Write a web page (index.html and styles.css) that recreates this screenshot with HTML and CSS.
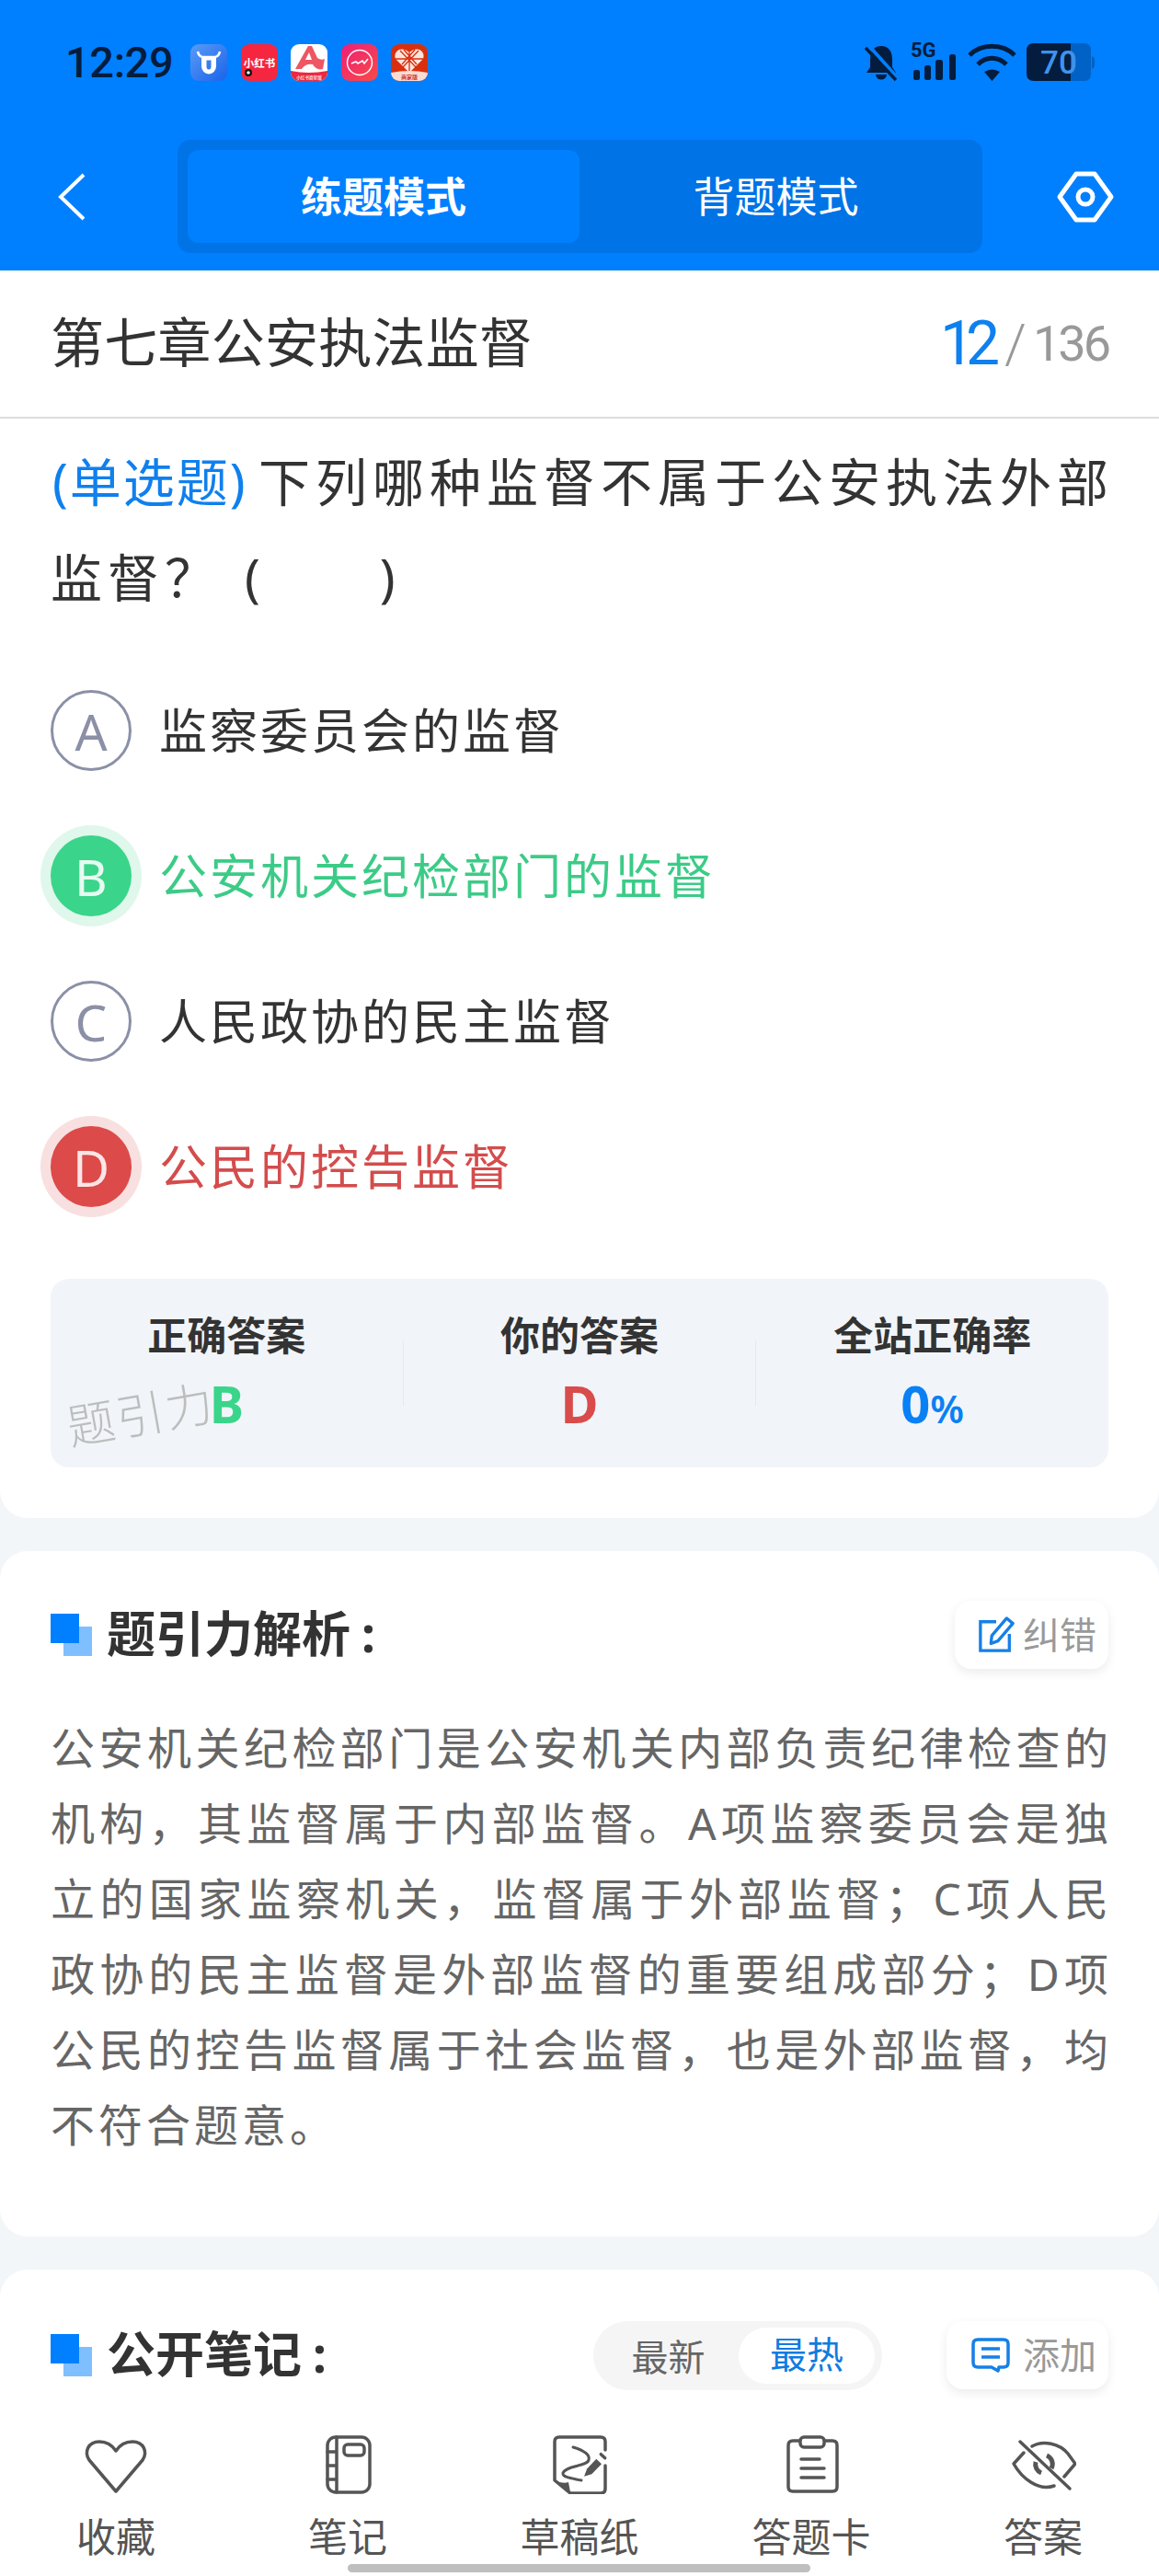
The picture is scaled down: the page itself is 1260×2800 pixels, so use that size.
FILE: index.html
```html
<!DOCTYPE html>
<html lang="zh-CN">
<head>
  <meta charset="UTF-8">
  <meta name="viewport" content="width=device-width, initial-scale=1.0">
  <title>第七章公安执法监督</title>
  <link rel="stylesheet" href="styles.css">
</head>
<body>
<div class="phone">

  <header class="top">
    <!-- Status bar -->
    <div class="status">
      <span class="time">12:29</span>
      <div class="apps">
        <svg class="app" viewBox="0 0 40 40">
          <defs><linearGradient id="appBlue" x1="0" y1="0" x2="1" y2="1"><stop offset="0" stop-color="#5a9bf6"/><stop offset="1" stop-color="#1a63ea"/></linearGradient></defs>
          <rect width="40" height="40" rx="9" fill="url(#appBlue)"/>
          <path d="M8 8 Q9 13 13 14 H27 Q31 13 32 8" fill="none" stroke="#fff" stroke-width="2.6"/>
          <path d="M12 14 H28 V24 A8 8.5 0 0 1 12 24 Z M17.5 17.5 V24 A2.5 3.5 0 0 0 22.5 24 V17.5 Z" fill="#fff" fill-rule="evenodd"/>
        </svg>
        <svg class="app" viewBox="0 0 40 40">
          <rect width="40" height="40" rx="9" fill="#f5263f"/>
          <text x="20" y="25" class="app-text" font-size="11.5" fill="#fff">小红书</text>
          <circle cx="8" cy="31" r="4" fill="#111"/>
          <circle cx="8" cy="31" r="1.8" fill="#eee"/>
        </svg>
        <svg class="app" viewBox="0 0 40 40">
          <rect width="40" height="40" rx="9" fill="#fff"/>
          <path d="M5 27 L19 2 H23 L29 15 Q33 18 37 16 L35 27 Q28 29 24 22 Q16 21 12 27 Z" fill="#ee5663"/>
          <path d="M16 17 L20 9 L23 17 Z" fill="#fff"/>
          <path d="M0 29 Q20 33 40 29 V31 A9 9 0 0 1 31 40 H9 A9 9 0 0 1 0 31 Z" fill="#ea2a41"/>
          <text x="20" y="37.5" class="app-text" font-size="4.6" fill="#ffd9dd">小红书商家版</text>
        </svg>
        <svg class="app" viewBox="0 0 40 40">
          <defs><linearGradient id="appPink" x1="0" y1="0" x2="1" y2="1"><stop offset="0" stop-color="#ee1f78"/><stop offset="1" stop-color="#f84b47"/></linearGradient></defs>
          <rect width="40" height="40" rx="9" fill="url(#appPink)"/>
          <circle cx="20" cy="20" r="13.5" fill="none" stroke="#fff" stroke-width="1.4"/>
          <path d="M11 21 L16 19 L18 21 L23 18 L25 21 L29 16" fill="none" stroke="#fff" stroke-width="1.6"/>
        </svg>
        <svg class="app" viewBox="0 0 40 40">
          <rect width="40" height="40" rx="9" fill="#d8300f"/>
          <path d="M20 31 L5 16 C2 8 11 1 20 9 C29 1 38 8 35 16 Z" fill="#fbe4dc"/>
          <path d="M20 9 V31 M5 16 H35 M10 7 L27 25 M30 7 L13 25 M12 22 L26 6 M28 22 L14 6" stroke="#d8300f" stroke-width="1.3"/>
          <path d="M0 31 Q20 27 40 31 A9 9 0 0 1 31 40 H9 A9 9 0 0 1 0 31 Z" fill="#fbdcd2"/>
          <text x="20" y="38" class="app-text" font-size="6" fill="#c33">商家版</text>
        </svg>
      </div>
      <div class="sys">
        <svg class="sys-bell" viewBox="0 0 38 41">
          <path d="M19 3 C10 3 7 10 7 18 V26 L3 32 H35 L31 26 V18 C31 10 28 3 19 3 Z M13 34 H25 A6 5.5 0 0 1 13 34 Z" fill="#041c3d"/>
          <path d="M5 2 L39 40" stroke="#0080ff" stroke-width="4"/>
          <path d="M2 5 L35 40" stroke="#041c3d" stroke-width="3.4"/>
        </svg>
        <svg class="sys-signal" viewBox="0 -6 50 48">
          <text x="0" y="16" class="sig-text">5G</text>
          <rect x="3" y="30" width="7" height="11" rx="2.5" fill="#041c3d"/>
          <rect x="15" y="25" width="7" height="16" rx="2.5" fill="#041c3d"/>
          <rect x="27" y="19" width="8" height="22" rx="2.5" fill="#041c3d"/>
          <rect x="42" y="13" width="7" height="28" rx="2.5" fill="#041c3d"/>
        </svg>
        <svg class="sys-wifi" viewBox="0 0 53 41">
          <path d="M2 13 C15 0 38 0 51 13 M11 23 C20 14 33 14 42 23" fill="none" stroke="#041c3d" stroke-width="5"/>
          <path d="M18 31 Q26.500 26 35 31 L26.500 41 Z" fill="#041c3d"/>
        </svg>
        <svg class="sys-batt" viewBox="0 0 74 41">
          <path d="M48 0 H63 Q70 0 70 8 V33 Q70 41 63 41 H48 Z M71 14 Q74 15 74 18 V24 Q74 27 71 28 Z" fill="#0062c6"/>
          <path d="M8 0 H48 V41 H8 Q0 41 0 33 V8 Q0 0 8 0 Z" fill="#041c3d"/>
          <text x="35" y="33" class="batt-text">70</text>
        </svg>
      </div>
    </div>

    <!-- Title bar with mode tabs -->
    <div class="bar">
      <div class="back">
        <svg viewBox="0 0 30 52"><path d="M28 2 L3 26 L28 50" fill="none" stroke="#fff" stroke-width="4"/></svg>
      </div>
      <div class="tabs">
        <div class="tab tab-on">练题模式</div>
        <div class="tab">背题模式</div>
      </div>
      <svg class="gear" viewBox="0 0 64 58">
        <path d="M22 4 H42 L60 29 L42 54 H22 L4 29 Z" fill="none" stroke="#fff" stroke-width="5" stroke-linejoin="round"/>
        <circle cx="32" cy="29" r="8" fill="none" stroke="#fff" stroke-width="5"/>
      </svg>
    </div>
  </header>

  <section class="card card-main">
    <div class="chapter">
      <span class="chapter-name">第七章公安执法监督</span>
      <span class="count"><span class="count-now">12</span><span class="count-slash">/</span><span class="count-all">136</span></span>
    </div>

    <div class="question">
      <div class="q-first"><span class="q-type">(单选题)</span><span class="q-main">下列哪种监督不属于公安执法外部</span></div>
      <div class="q-second"><span>监督？</span><span class="q-blank">(　　)</span></div>
    </div>

    <div class="options">
      <div class="option"><span class="letter">A</span><span class="opt-text">监察委员会的监督</span></div>
      <div class="option is-right"><span class="letter">B</span><span class="opt-text">公安机关纪检部门的监督</span></div>
      <div class="option"><span class="letter">C</span><span class="opt-text">人民政协的民主监督</span></div>
      <div class="option is-wrong"><span class="letter">D</span><span class="opt-text">公民的控告监督</span></div>
    </div>

    <div class="stats">
      <div class="stat">
        <div class="stat-label">正确答案</div>
        <div class="stat-value green">B</div>
      </div>
      <div class="stat-line"></div>
      <div class="stat">
        <div class="stat-label">你的答案</div>
        <div class="stat-value red">D</div>
      </div>
      <div class="stat-line"></div>
      <div class="stat">
        <div class="stat-label">全站正确率</div>
        <div class="stat-value blue">0<small>%</small></div>
      </div>
      <div class="watermark">题引力</div>
    </div>
  </section>

  <section class="card card-gap">
    <div class="head">
      <h2 class="head-title">
        <svg class="mark" viewBox="0 0 45 46"><rect x="14" y="14" width="31" height="32" fill="#80bfff"/><rect width="31" height="32" fill="#0080ff"/></svg>
        <span class="head-text">题引力解析<span class="colon">:</span></span>
      </h2>
      <div class="chip">
        <svg class="chip-icon" viewBox="0 0 42 42">
          <path d="M21 6 H3 V39 H36 V20" fill="none" stroke="#1580e6" stroke-width="3.500"/>
          <path d="M33 2 L40 8 L23 28 L15 31 L16 22 Z" fill="none" stroke="#1580e6" stroke-width="3.500" stroke-linejoin="round"/>
        </svg>
        <span class="chip-text">纠错</span>
      </div>
    </div>
    <p class="analysis">公安机关纪检部门是公安机关内部负责纪律检查的机构，其监督属于内部监督。A项监察委员会是独立的国家监察机关，监督属于外部监督；C项人民政协的民主监督是外部监督的重要组成部分；D项公民的控告监督属于社会监督，也是外部监督，均不符合题意。</p>
  </section>

  <section class="card card-gap card-notes">
    <div class="head">
      <h2 class="head-title">
        <svg class="mark" viewBox="0 0 45 46"><rect x="14" y="14" width="31" height="32" fill="#80bfff"/><rect width="31" height="32" fill="#0080ff"/></svg>
        <span class="head-text">公开笔记<span class="colon">:</span></span>
      </h2>
      <div class="head-right">
        <div class="sort">
          <span class="sort-item">最新</span>
          <span class="sort-item sort-on">最热</span>
        </div>
        <div class="chip chip-add">
          <svg class="chip-icon" viewBox="0 0 42 38">
            <path d="M7 2 H35 Q40 2 40 7 V27 Q40 32 35 32 H30 L29 36 L22 32 H7 Q2 32 2 27 V7 Q2 2 7 2 Z" fill="none" stroke="#1580e6" stroke-width="3.500" stroke-linejoin="round"/>
            <path d="M11 12 H31 M11 21 H31" stroke="#1580e6" stroke-width="3.500"/>
          </svg>
          <span class="chip-text">添加</span>
        </div>
      </div>
    </div>
  </section>

  <!-- Bottom toolbar -->
  <nav class="tools">
    <div class="tool">
      <svg class="tool-icon" viewBox="-1 0 72 64"><path d="M35 61 L6 27 C0 18 5 7 17 7 C25 7 31 11 35 17 C39 11 45 7 53 7 C65 7 70 18 64 27 Z"/></svg>
      <span class="tool-name">收藏</span>
    </div>
    <div class="tool">
      <svg class="tool-icon" viewBox="-1 0 72 64">
        <rect x="13" y="2" width="46" height="60" rx="9"/>
        <path d="M23 2 V62 M13 18 H23 M13 33 H23 M13 48 H23"/>
        <rect x="31" y="10" width="22" height="12" rx="4"/>
      </svg>
      <span class="tool-name">笔记</span>
    </div>
    <div class="tool">
      <svg class="tool-icon" viewBox="-1 0 72 64">
        <path d="M63 16 V7 Q63 2 58 2 H13 Q8 2 8 7 V49 L25 63 H58 Q63 63 63 58 V33"/>
        <path class="tool-fill" d="M10 50 Q18 53 23 51 L25 62 Z"/>
        <path class="tool-thin" d="M28 13 C38 16 47 20 45 27 C43 34 20 33 17 41 C16 46 28 47 37 49"/>
        <path class="tool-fill" d="M43.300 36.300 L53.300 25.700 L59 31.300 L48.300 42.300 L40 44.700 Z"/>
        <path d="M58.300 20.700 L62.700 24.700"/>
      </svg>
      <span class="tool-name">草稿纸</span>
    </div>
    <div class="tool">
      <svg class="tool-icon" viewBox="-1 0 72 64">
        <path d="M22 6 H15 Q10 6 10 11 V56 Q10 61 15 61 H58 Q63 61 63 56 V11 Q63 6 58 6 H50"/>
        <rect x="23" y="2" width="26" height="11" rx="4"/>
        <path d="M24 26 H44 M24 36 H49 M24 46 H49"/>
      </svg>
      <span class="tool-name">答题卡</span>
    </div>
    <div class="tool">
      <svg class="tool-icon" viewBox="-1 0 72 64">
        <path d="M23 12 C35 5 53 9 62 20 L70 31 L58 45"/>
        <path d="M14 19 L3 31 C12 47 30 61 47 55"/>
        <path d="M10 7 L64 58"/>
        <path class="tool-thick" d="M39 22 A10 10 0 0 1 44 36 M27 29 A10 10 0 0 0 33 41"/>
      </svg>
      <span class="tool-name">答案</span>
    </div>
  </nav>

  <div class="home-bar"></div>
</div>
</body>
</html>
```

FILE: styles.css
```css
/* Page frame */
body {
  margin: 0;
  background-color: #f2f6f9;
  font-family: "Noto Sans", "Noto Sans CJK SC", sans-serif;
  color: #333;
}
.phone {
  position: relative;
  display: flex;
  flex-direction: column;
  width: 1260px;
  height: 2800px;
  overflow: hidden;
}

/* Blue header */
.top {
  height: 294px;
  background-color: #0080ff;
  flex-shrink: 0;
}
.status {
  display: flex;
  align-items: center;
  height: 41px;
  padding: 47px 70px 64px 71px;
}
.time {
  width: 136px;
  font-family: Roboto, sans-serif;
  font-size: 47px;
  font-weight: 500;
  letter-spacing: -0.400px;
  color: #041c3d;
}
.apps {
  display: flex;
  gap: 14.500px;
}
.app {
  width: 40px;
  height: 40px;
  display: block;
}
.app-text {
  font-family: "Noto Sans CJK SC", sans-serif;
  font-weight: 700;
  text-anchor: middle;
}
.sys {
  display: flex;
  align-items: flex-end;
  margin-left: auto;
  height: 41px;
}
.sys svg {
  display: block;
  height: 41px;
}
.sys-bell { width: 38px; }
.sys .sys-signal { width: 50px; height: 48px; margin-left: 13px; }
.sys-wifi { width: 53px; margin-left: 12px; }
.sys-batt { width: 74px; margin-left: 11px; }
.sig-text {
  font-family: Roboto, sans-serif;
  font-size: 22px;
  font-weight: 700;
  fill: #041c3d;
}
.batt-text {
  font-family: Roboto, sans-serif;
  font-size: 35px;
  font-weight: 500;
  fill: #3f93ec;
  text-anchor: middle;
}

.bar {
  display: flex;
  align-items: center;
  height: 123px;
}
.back {
  width: 130px;
  padding-left: 63px;
  box-sizing: content-box;
}
.back svg {
  display: block;
  width: 30px;
  height: 52px;
}
.tabs {
  display: flex;
  width: 853px;
  height: 101px;
  padding: 11px;
  border-radius: 14px;
  background-color: #0073e6;
}
.tab {
  display: flex;
  flex: 1;
  align-items: center;
  justify-content: center;
  padding-bottom: 4px;
  border-radius: 12px;
  font-size: 45px;
  color: #fff;
}
.tab-on {
  flex: none;
  box-sizing: border-box;
  width: 426px;
  background-color: #0080ff;
  font-weight: 700;
}
.gear {
  width: 64px;
  height: 58px;
  margin-left: 80px;
}

/* White cards */
.card {
  background-color: #fff;
  padding: 0 55px;
}
.card-main {
  height: 1356px;
  box-sizing: border-box;
  border-radius: 0 0 30px 30px;
  flex-shrink: 0;
}
.card-gap {
  margin-top: 36px;
  padding-top: 54px;
  border-radius: 30px;
}
.card-notes {
  flex: 1;
  padding-top: 56px;
  border-radius: 30px 30px 0 0;
}

.chapter {
  display: flex;
  align-items: center;
  justify-content: space-between;
  height: 159px;
  margin: 0 -55px;
  padding: 0 55px;
  border-bottom: 2px solid #ddd;
}
.chapter-name {
  padding-bottom: 10px;
  font-size: 58px;
  letter-spacing: 0.250px;
  color: #333;
}
.count {
  display: flex;
  align-items: center;
  font-family: Roboto, sans-serif;
  line-height: 70px;
  color: #999;
}
.count-now {
  font-size: 66px;
  font-weight: 400;
  letter-spacing: -9px;
  color: #0f80ee;
  margin-right: 14px;
}
.count-slash {
  font-size: 60px;
  font-weight: 300;
  margin-right: 7px;
}
.count-all {
  font-size: 54px;
  font-weight: 400;
  letter-spacing: -3px;
}

.question {
  margin: 16px -6px 0 0;
  font-size: 56px;
  line-height: 104px;
  letter-spacing: 6px;
}
.q-first {
  display: flex;
  justify-content: space-between;
}
.q-second {
  display: flex;
}
.q-blank {
  margin-left: 25px;
  white-space: pre;
}
.q-type {
  margin-left: 2px;
  color: #0f80ee;
  letter-spacing: 2px;
}

/* Answer options */
.options {
  margin-top: 36px;
}
.option {
  display: flex;
  align-items: center;
  gap: 30px;
  height: 158px;
  font-size: 52px;
  letter-spacing: 3px;
  color: #333;
}
.opt-text {
  padding-bottom: 6px;
}
.letter {
  display: flex;
  align-items: center;
  justify-content: center;
  box-sizing: border-box;
  width: 88px;
  height: 88px;
  border: 3px solid #8b90a7;
  border-radius: 50%;
  font-size: 55px;
  font-weight: 400;
  letter-spacing: 0;
  color: #8b90a7;
}
.is-right { color: #3ccb87; }
.is-right .letter {
  border: none;
  background-color: #3ad58a;
  box-shadow: 0 0 0 11px #e0f7ec;
  color: #e6fbf1;
}
.is-wrong { color: #d44c4c; }
.is-wrong .letter {
  border: none;
  background-color: #dc4a4a;
  box-shadow: 0 0 0 11px #f8e0e0;
  color: #fbe6e6;
}

/* Answer summary box */
.stats {
  position: relative;
  display: flex;
  height: 205px;
  margin-top: 43px;
  border-radius: 20px;
  background-color: #f1f5f9;
}
.stat {
  flex: 1;
  padding-top: 32px;
  text-align: center;
}
.stat-label {
  font-size: 43px;
  line-height: 60px;
  font-weight: 700;
}
.stat-value {
  margin-top: 8px;
  font-size: 56px;
  line-height: 70px;
  font-weight: 700;
}
.stat-value small {
  font-size: 42px;
  font-weight: 600;
}
.green { color: #3ad58a; }
.red { color: #d94c4c; }
.blue { color: #0a80f5; }
.stat-line {
  width: 1px;
  height: 71px;
  margin-top: 67px;
  background-color: #e6eaee;
}
.watermark {
  position: absolute;
  left: 17px;
  top: 117px;
  font-size: 52px;
  line-height: 60px;
  font-weight: 300;
  letter-spacing: 2px;
  color: #bdbdbd;
  transform: rotate(-10deg);
}

/* Section heads */
.head {
  display: flex;
  align-items: center;
  justify-content: space-between;
  height: 74px;
}
.head-title {
  display: flex;
  align-items: center;
  gap: 16px;
  margin: 0;
  font-size: 53px;
  font-weight: 700;
}
.head-text {
  padding-bottom: 7px;
}
.colon {
  margin-left: 12px;
}
.mark {
  width: 45px;
  height: 46px;
}
.head-right {
  display: flex;
  align-items: center;
  gap: 70px;
}
.chip {
  display: flex;
  align-items: center;
  gap: 8px;
  height: 74px;
  padding: 0 13px 0 24px;
  border-radius: 18px;
  background-color: #fff;
  box-shadow: 0 4px 12px rgba(0, 0, 0, 0.08);
  font-size: 40px;
  color: #999;
}
.chip-add {
  gap: 14px;
  padding-left: 27px;
}
.chip-text {
  padding-bottom: 5px;
}
.chip-icon {
  width: 42px;
  height: 40px;
}
.sort {
  display: flex;
  align-items: center;
  width: 314px;
  height: 75px;
  box-sizing: border-box;
  padding: 0 8px 0 0;
  border-radius: 38px;
  background-color: #f5f5f5;
  font-size: 40px;
  color: #666;
}
.sort-item {
  flex: 1;
  padding-left: 5px;
  text-align: center;
}
.sort-on {
  flex: none;
  width: 148px;
  height: 61px;
  padding-left: 0;
  line-height: 58px;
  border-radius: 31px;
  background-color: #fff;
  color: #0f7ce0;
}

.analysis {
  margin: 45px -4px 0 0;
  padding-bottom: 80px;
  font-size: 48px;
  line-height: 82px;
  letter-spacing: 4px;
  text-align: justify;
  color: #666;
}

/* Bottom toolbar */
.tools {
  display: flex;
  height: 170px;
  box-sizing: border-box;
  padding-top: 17px;
  background-color: #fff;
  flex-shrink: 0;
}
.tool {
  display: flex;
  flex: 1;
  flex-direction: column;
  align-items: center;
}
.tool-icon {
  width: 72px;
  height: 64px;
  fill: none;
  stroke: #555;
  stroke-width: 3.500;
  stroke-linecap: round;
  stroke-linejoin: round;
}
.tool-fill {
  fill: #555;
  stroke: none;
}
.tool-thin { stroke-width: 3; }
.tool-thick { stroke-width: 5; stroke-linecap: butt; }
.tool-name {
  margin-top: 22px;
  font-size: 43px;
  line-height: 50px;
  color: #555;
}
.home-bar {
  position: absolute;
  left: 378px;
  bottom: 4px;
  width: 503px;
  height: 9px;
  border-radius: 5px;
  background-color: #bfbfbf;
}
```
